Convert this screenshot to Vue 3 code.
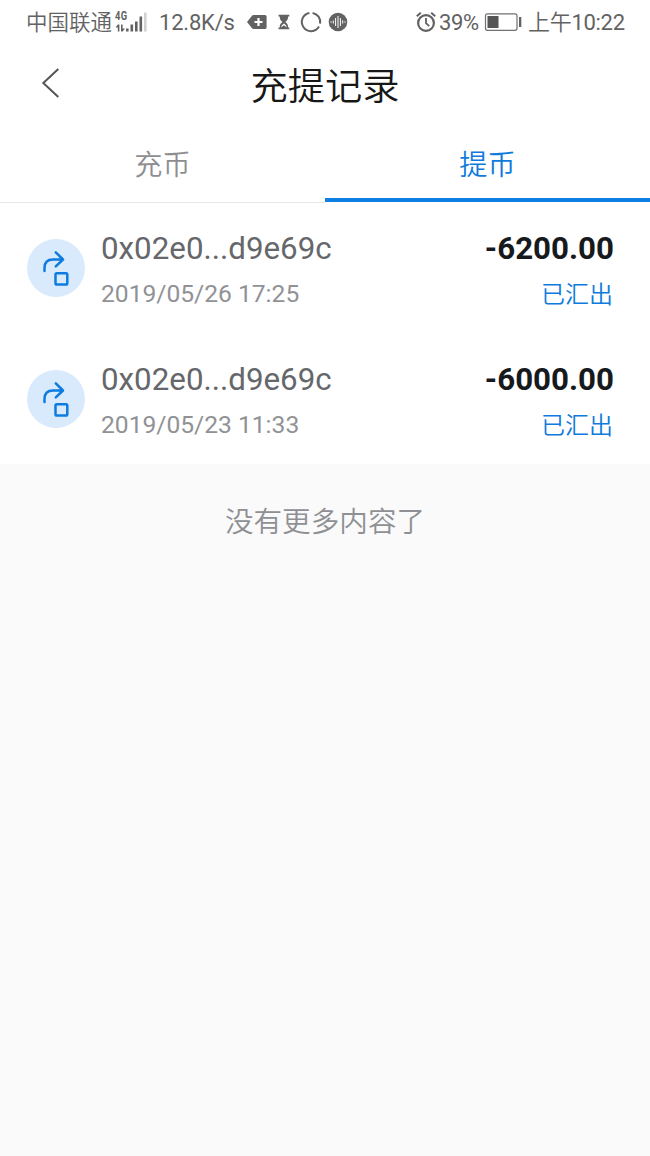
<script setup>
const records = [
  { address: '0x02e0...d9e69c', time: '2019/05/26 17:25', amount: '-6200.00', status: '已汇出' },
  { address: '0x02e0...d9e69c', time: '2019/05/23 11:33', amount: '-6000.00', status: '已汇出' },
]
</script>

<template>
  <div class="screen">
    <div class="status">
      <span class="carrier">中国联通</span>
      <div class="signal">
        <span class="net">4G</span>
        <svg width="33" height="24" viewBox="0 0 33 24">
          <g fill="#626262">
            <path d="M2.8 14.500h1.600v7H2.800zM0.600 17.500L2.800 14.500V17.500zM6 14.500h1.600v7H6zM7.600 21.500V18.500H10z" />
            <rect x="11" y="18.500" width="2.600" height="3" />
            <rect x="15.500" y="14.500" width="2.600" height="7" />
            <rect x="20" y="11.500" width="2.600" height="10" />
            <rect x="24.500" y="6.500" width="2.600" height="15" />
          </g>
          <rect x="29" y="2.500" width="2.600" height="19" fill="#d2d2d2" />
        </svg>
      </div>
      <span class="speed">12.8K/s</span>
      <svg class="notes" width="104" height="24" viewBox="246 10 104 24">
        <path d="M247 22l5-6.200q.6-.8 1.600-.8H265q1.600 0 1.600 1.600v10.800q0 1.600-1.600 1.600h-11.400q-1 0-1.600-.8z" fill="#626262" />
        <path d="M258.500 18v8M254.500 22h8" stroke="#fff" stroke-width="2.200" />
        <path d="M278.500 14.800h10.800v1.800h-1.200c0 3-1 4-2.800 5.400 1.800 1.400 2.800 2.400 2.800 5.400h1.200v1.800h-10.800v-1.800h1.200c0-3 1-4 2.800-5.400-1.800-1.400-2.800-2.400-2.800-5.400h-1.200z" fill="#626262" />
        <path d="M281 27.500q.2-2.500 2.900-4 2.700 1.500 2.900 4l-2.900-2.300z" fill="#fff" />
        <g fill="none" stroke="#626262" stroke-width="2">
          <path d="M312.600 12.900A9.200 9.200 0 0 1 320.100 23.600" />
          <path d="M319 26.600A9.200 9.200 0 1 1 309.400 12.900" />
        </g>
        <circle cx="338" cy="22" r="9.300" fill="#626262" />
        <path d="M331 21.300v1.400M333.300 20.500v3M335.600 18v8M338 16v12M340.400 18v8M342.700 20.500v3M345 21.300v1.400" stroke="#fff" stroke-width="1" />
      </svg>
      <svg class="alarm" width="22" height="24" viewBox="415 10 22 24" fill="none" stroke="#626262">
        <circle cx="426" cy="23" r="7.900" stroke-width="2.200" />
        <path d="M426 18v5.200l3.200 3" stroke-width="1.800" />
        <path d="M416.800 16.200l4-3.500M435.200 16.200l-4-3.500" stroke-width="2" />
      </svg>
      <span class="percent">39%</span>
      <svg class="battery" width="38" height="24" viewBox="484 10 38 24">
        <rect x="485.500" y="13.800" width="31.500" height="16.500" rx="2" fill="none" stroke="#707070" stroke-width="1.200" />
        <rect x="487.500" y="16" width="11" height="12" fill="#555" />
        <rect x="519" y="17" width="2.300" height="10" fill="#626262" />
      </svg>
      <span class="clock"><span class="period">上午</span>10:22</span>
    </div>

    <header class="header">
      <svg class="back" width="20" height="32" viewBox="0 0 20 32">
        <path d="M18.300 2L3.300 16l15 14" fill="none" stroke="#555" stroke-width="2" />
      </svg>
      <h1>充提记录</h1>
    </header>

    <nav class="tabs">
      <div class="tab">充币</div>
      <div class="tab active">提币</div>
    </nav>

    <main class="list">
      <div v-for="r in records" :key="r.time" class="row">
        <svg class="badge" width="58" height="58" viewBox="0 0 58 58">
          <circle cx="29" cy="29" r="29" fill="#d9eafd" />
          <g fill="none" stroke="#0d7be0" stroke-width="2.500" stroke-linecap="round" stroke-linejoin="round">
            <path d="M17.500 32V29q0-8.500 8.500-8.500h9.500M28.800 13.300l7.200 7.200-7.200 6.800" />
            <rect x="28.500" y="34.200" width="11.800" height="11.300" rx="1.300" />
          </g>
        </svg>
        <div class="info">
          <div class="address">{{ r.address }}</div>
          <div class="time">{{ r.time }}</div>
        </div>
        <div class="result">
          <div class="amount">{{ r.amount }}</div>
          <div class="state">{{ r.status }}</div>
        </div>
      </div>
    </main>

    <footer class="end">没有更多内容了</footer>
  </div>
</template>

<style>
body {
  background: #fafafa;
}
</style>

<style scoped>
.screen {
  width: 650px;
  height: 1156px;
  overflow: hidden;
  background: #fafafa;
  font-family: Roboto, "Noto Sans CJK SC", sans-serif;
  font-weight: 400;
}
.status {
  display: flex;
  align-items: center;
  height: 44px;
  box-sizing: border-box;
  padding-left: 26px;
  background: #fff;
  color: #626262;
  font-size: 22px;
  line-height: 44px;
  white-space: nowrap;
}
.status > span {
  padding-top: 2px;
}
.carrier {
  width: 89px;
  font-size: 21.5px;
  font-weight: 350;
}
.signal {
  position: relative;
  width: 33px;
  height: 24px;
}
.signal svg {
  display: block;
}
.net {
  position: absolute;
  left: 0;
  top: -1px;
  font-size: 13px;
  line-height: 13px;
  font-weight: 700;
  letter-spacing: 0.5px;
  transform: scaleX(0.72);
  transform-origin: left;
}
.speed {
  width: 87px;
  padding-left: 11px;
  box-sizing: border-box;
  letter-spacing: -0.2px;
}
.notes {
  margin-left: 11px;
}
.alarm {
  margin-left: 65px;
}
.percent {
  width: 45px;
  margin-left: 2px;
  letter-spacing: -0.4px;
}
.clock {
  margin-left: 6px;
  letter-spacing: -0.3px;
}
.period {
  font-weight: 350;
}
.header {
  position: relative;
  display: flex;
  align-items: center;
  justify-content: center;
  height: 81px;
  background: #fff;
}
.back {
  position: absolute;
  left: 40px;
  top: 23px;
}
h1 {
  margin: 0;
  padding-top: 6px;
  color: #171717;
  font-size: 37.3px;
  line-height: 75px;
  font-weight: 350;
}
.tabs {
  display: flex;
  height: 78px;
  background: #fff;
}
.tab {
  flex: 1;
  height: 78px;
  box-sizing: border-box;
  border-bottom: 1px solid #e6e6e6;
  color: #8e8e92;
  font-size: 28.2px;
  line-height: 81px;
  font-weight: 350;
  text-align: center;
}
.tab.active {
  height: 77px;
  border-bottom: 4px solid #0f7ee5;
  color: #0f7bdc;
}
.row {
  display: flex;
  height: 130.5px;
  box-sizing: border-box;
  padding: 24px 37px 0 27px;
  background: #fff;
}
.badge {
  margin-top: 12px;
}
.info {
  flex: 1;
  margin-left: 16px;
}
.address {
  height: 44px;
  line-height: 44px;
  font-size: 31.3px;
  color: #65676b;
}
.time {
  height: 46px;
  line-height: 46px;
  font-size: 24.6px;
  color: #909296;
}
.result {
  text-align: right;
}
.amount {
  height: 44px;
  line-height: 44px;
  margin-right: -1px;
  font-size: 31.3px;
  font-weight: 700;
  color: #171a1d;
}
.state {
  height: 46px;
  line-height: 49px;
  font-size: 24px;
  font-weight: 350;
  color: #0f7bdc;
}
.end {
  padding-top: 37px;
  line-height: 42px;
  color: #8e9094;
  font-size: 28.6px;
  font-weight: 350;
  text-align: center;
}
</style>
